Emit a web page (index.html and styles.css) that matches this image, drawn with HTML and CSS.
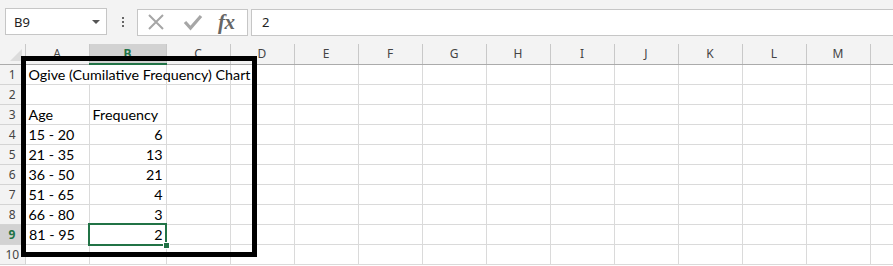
FILE: index.html
```html
<!DOCTYPE html>
<html lang="en">

<head>
    <meta charset="UTF-8">
    <title>Ogive Chart</title>
    <link rel="stylesheet" href="styles.css">
</head>

<body>
    <div class="toolbar">
        <div class="nameBox">
            <span>B9</span>
            <span class="dropArrow"></span>
        </div>
        <div class="dots">
            <span></span><span></span><span></span>
        </div>
        <div class="fxButtons">
            <svg class="fxIcon" width="18" height="18" viewBox="0 0 18 18">
                <path d="M2 2 L16 16 M16 2 L2 16" stroke="#a6a6a6" stroke-width="2" fill="none" />
            </svg>
            <svg class="fxIcon" width="20" height="18" viewBox="0 0 20 18">
                <path d="M2 9 L7.5 15 L18 3" stroke="#a6a6a6" stroke-width="3.2" fill="none" />
            </svg>
            <span class="fxText">fx</span>
        </div>
        <div class="formulaInput">2</div>
    </div>

    <div class="sheet">
        <table class="grid">
            <colgroup>
                <col class="colHead">
                <col class="colA">
                <col class="colB">
                <col class="colStd">
                <col class="colStd">
                <col class="colStd">
                <col class="colStd">
                <col class="colStd">
                <col class="colStd">
                <col class="colStd">
                <col class="colStd">
                <col class="colStd">
                <col class="colStd">
                <col class="colStd">
                <col class="colStd">
            </colgroup>
            <tr class="headRow">
                <th class="corner"><span class="cornerTri"></span></th>
                <th>A</th>
                <th class="selHead">B</th>
                <th>C</th>
                <th>D</th>
                <th>E</th>
                <th>F</th>
                <th>G</th>
                <th>H</th>
                <th>I</th>
                <th>J</th>
                <th>K</th>
                <th>L</th>
                <th>M</th>
                <th></th>
            </tr>
            <tr>
                <th>1</th>
                <td class="overflow">Ogive (Cumilative Frequency) Chart</td>
                <td></td><td></td><td></td><td></td><td></td><td></td><td></td><td></td><td></td><td></td><td></td><td></td><td></td>
            </tr>
            <tr>
                <th>2</th>
                <td></td><td></td><td></td><td></td><td></td><td></td><td></td><td></td><td></td><td></td><td></td><td></td><td></td><td></td>
            </tr>
            <tr>
                <th>3</th>
                <td>Age</td><td>Frequency</td>
                <td></td><td></td><td></td><td></td><td></td><td></td><td></td><td></td><td></td><td></td><td></td><td></td>
            </tr>
            <tr>
                <th>4</th>
                <td>15 - 20</td><td class="num">6</td>
                <td></td><td></td><td></td><td></td><td></td><td></td><td></td><td></td><td></td><td></td><td></td><td></td>
            </tr>
            <tr>
                <th>5</th>
                <td>21 - 35</td><td class="num">13</td>
                <td></td><td></td><td></td><td></td><td></td><td></td><td></td><td></td><td></td><td></td><td></td><td></td>
            </tr>
            <tr>
                <th>6</th>
                <td>36 - 50</td><td class="num">21</td>
                <td></td><td></td><td></td><td></td><td></td><td></td><td></td><td></td><td></td><td></td><td></td><td></td>
            </tr>
            <tr>
                <th>7</th>
                <td>51 - 65</td><td class="num">4</td>
                <td></td><td></td><td></td><td></td><td></td><td></td><td></td><td></td><td></td><td></td><td></td><td></td>
            </tr>
            <tr>
                <th>8</th>
                <td>66 - 80</td><td class="num">3</td>
                <td></td><td></td><td></td><td></td><td></td><td></td><td></td><td></td><td></td><td></td><td></td><td></td>
            </tr>
            <tr>
                <th class="selHead selRow">9</th>
                <td>81 - 95</td><td class="num">2</td>
                <td></td><td></td><td></td><td></td><td></td><td></td><td></td><td></td><td></td><td></td><td></td><td></td>
            </tr>
            <tr>
                <th>10</th>
                <td></td><td></td><td></td><td></td><td></td><td></td><td></td><td></td><td></td><td></td><td></td><td></td><td></td><td></td>
            </tr>
        </table>

        <!-- selected cell B9 -->
        <div class="selection"><span class="fillHandle"></span></div>
        <!-- black frame drawn round the data -->
        <div class="frame"></div>
    </div>
</body>

</html>
```

FILE: styles.css
```css
body {
    margin: 0;
    width: 893px;
    height: 266px;
    overflow: hidden;
    background-color: #ffffff;
    font-family: Lato, "Liberation Sans", sans-serif;
}

.toolbar {
    display: flex;
    align-items: center;
    height: 44px;
    padding: 0 0 0 5px;
    box-sizing: border-box;
    background-color: #f3f3f3;
}

.nameBox {
    display: flex;
    align-items: center;
    justify-content: space-between;
    width: 102px;
    height: 27px;
    margin-top: -0.5px;
    padding: 0 6px 0 8px;
    box-sizing: border-box;
    background-color: #ffffff;
    border: 1px solid #c6c6c6;
    font-family: "Noto Sans", sans-serif;
    font-size: 13px;
    color: #222222;
}

.dropArrow {
    width: 0;
    height: 0;
    border-left: 4px solid transparent;
    border-right: 4px solid transparent;
    border-top: 4px solid #555555;
}

.dots {
    display: flex;
    flex-direction: column;
    gap: 2px;
    margin: 0 13px 0 15px;
}

.dots span {
    width: 2px;
    height: 2px;
    background-color: #666666;
}

.fxButtons {
    display: flex;
    align-items: center;
    width: 111px;
    height: 27px;
    padding: 0 0 0 9px;
    box-sizing: border-box;
    background-color: #ffffff;
    border: 1px solid #c6c6c6;
}

.fxIcon {
    margin-right: 18px;
}

.fxButtons .fxIcon:nth-child(2) {
    margin-right: 15px;
}

.fxText {
    font-family: "Liberation Serif", serif;
    font-style: italic;
    font-weight: bold;
    font-size: 21px;
    color: #666666;
    letter-spacing: -0.5px;
}

.formulaInput {
    flex: 1;
    height: 27px;
    margin-left: 3px;
    padding-left: 10px;
    line-height: 25px;
    box-sizing: border-box;
    background-color: #ffffff;
    border: 1px solid #c6c6c6;
    border-right: none;
    font-family: "Noto Sans", sans-serif;
    font-size: 13px;
    color: #222222;
}

.sheet {
    position: relative;
}

table.grid {
    border-collapse: collapse;
    table-layout: fixed;
    width: 934px;
}

col.colHead { width: 25px; }
col.colA { width: 64px; }
col.colB { width: 77px; }
col.colStd { width: 64px; }

table.grid tr {
    height: 20px;
}

table.grid th {
    padding: 0;
    background-color: #f3f3f3;
    border-right: 1px solid #d4d4d4;
    border-bottom: 1px solid #d4d4d4;
    font-family: "Noto Sans", sans-serif;
    font-weight: normal;
    font-size: 12px;
    color: #444444;
    text-align: center;
}

table.grid tr.headRow th {
    border-bottom: 1px solid #ababab;
    border-right: 1px solid #c8c8c8;
}

table.grid tr.headRow th.selHead {
    background-color: #d2d2d2;
    border-bottom: 2px solid #217346;
}

table.grid th.selHead {
    background-color: #d2d2d2;
    color: #217346;
    font-weight: bold;
}

table.grid th.selRow {
    border-right: 2px solid #217346;
}

th.corner {
    position: relative;
}

.cornerTri {
    position: absolute;
    right: 3px;
    bottom: 3px;
    width: 0;
    height: 0;
    border-left: 12px solid transparent;
    border-bottom: 12px solid #dcdcdc;
}

table.grid td {
    padding: 0 3px 0 3px;
    border-right: 1px solid #dadada;
    border-bottom: 1px solid #dadada;
    font-size: 14.3px;
    color: #000000;
    white-space: nowrap;
    vertical-align: bottom;
    line-height: 18px;
}

table.grid td.overflow {
    overflow: visible;
    border-right: none;
}

table.grid td.num {
    text-align: right;
}

.selection {
    position: absolute;
    left: 88px;
    top: 179px;
    width: 79px;
    height: 23px;
    box-sizing: border-box;
    border: 2px solid #217346;
}

.fillHandle {
    position: absolute;
    right: -5px;
    bottom: -5px;
    width: 5px;
    height: 5px;
    background-color: #217346;
    border: 1px solid #ffffff;
}

.frame {
    position: absolute;
    left: 21px;
    top: 12px;
    width: 236px;
    height: 201px;
    box-sizing: border-box;
    border: 5px solid #000000;
}
```
